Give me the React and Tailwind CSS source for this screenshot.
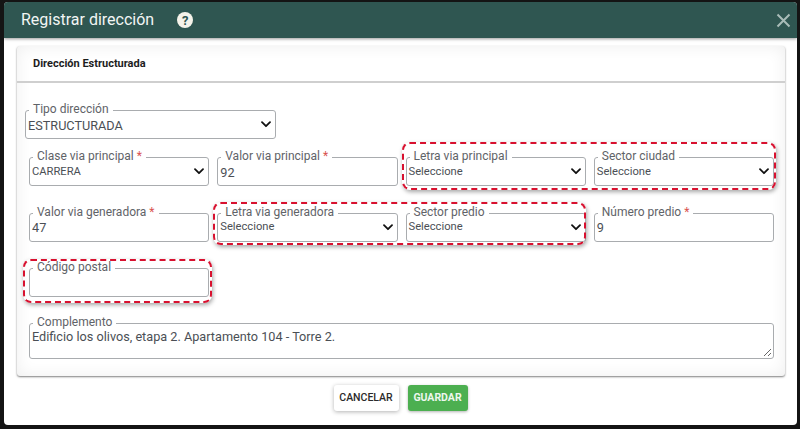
import React from "react";

const Chevron = () => (
  <svg width="10" height="7" viewBox="0 0 10 7" fill="none" className="shrink-0">
    <path d="M1 1.2 L5 5.2 L9 1.2" stroke="#111" strokeWidth="1.8" strokeLinecap="round" strokeLinejoin="round" />
  </svg>
);

const Field = ({ label, required, value, select, small, className = "" }) => (
  <div className={`relative h-[29px] rounded-[3px] border border-[#a9acaf] bg-white ${className}`}>
    <div className="absolute -top-[10px] left-[3px] flex items-center bg-white px-[4px] text-[12px] leading-[16px] text-[#5f6368] whitespace-nowrap">
      {label}
      {required && <span className="ml-[3px] text-[#d9534f]">*</span>}
    </div>
    <div className="flex h-full items-center justify-between pl-[2px] pr-[4px]">
      <span className={`${small ? "text-[11.2px]" : "text-[12.7px] pt-[2px]"} leading-[18px] text-[#4b4f55]`}>{value}</span>
      {select && <Chevron />}
    </div>
  </div>
);

const Marked = ({ className }) => (
  <div
    className={`pointer-events-none absolute rounded-[8px] border-2 border-dashed border-[#d8112f] shadow-[1px_2px_4px_rgba(0,0,0,0.35)] ${className}`}
  />
);

export default function App() {
  return (
    <div className="h-[429px] w-[800px] overflow-hidden bg-[#141414] pl-[4px] pr-[3px] pt-[2px] pb-[4px] font-['Roboto',sans-serif]">
      <div className="flex h-full flex-col overflow-hidden rounded-[4px] bg-white">
        {/* header */}
        <div className="flex h-[36px] shrink-0 items-center justify-between bg-[#2f5651] pl-[17px] pr-[6px] shadow-[0_1px_3px_rgba(0,0,0,0.4)]">
          <div className="flex items-center">
            <h1 className="text-[16px] font-normal leading-[22px] text-[#f2f5f4]">Registrar dirección</h1>
            <div className="ml-[23px] flex h-[16px] w-[16px] items-center justify-center rounded-full bg-[#f5f3ea] text-[13px] font-bold leading-none text-[#2f5651]">
              ?
            </div>
          </div>
          <svg width="15" height="15" viewBox="0 0 15 15" fill="none">
            <path d="M1.5 1.5 L13.5 13.5 M13.5 1.5 L1.5 13.5" stroke="#a9bcb8" strokeWidth="2" />
          </svg>
        </div>

        {/* panel */}
        <div className="ml-[13px] mr-[12px] mt-[8px] flex h-[330px] flex-col rounded-[3px] bg-white shadow-[0_1px_2px_rgba(0,0,0,0.5),inset_0_0_16px_rgba(0,0,0,0.07)]">
          <div className="flex h-[37px] shrink-0 items-center border-b-2 border-[#cfcfcf] pl-[16px] pt-[1px] text-[11px] font-bold text-[#1d1d1d]">
            Dirección Estructurada
          </div>
          <div className="relative flex-1 pl-[12px] pr-[11px] pt-[27px]">
            <Field label="Tipo dirección" value="ESTRUCTURADA" select className="-ml-[4px] w-[251px]" />

            <div className="mt-[18px] grid grid-cols-4 gap-x-[8px] gap-y-[26.5px]">
              <Field label="Clase via principal" required value="CARRERA" select small />
              <Field label="Valor via principal" required value="92" />
              <Field label="Letra via principal" value="Seleccione" select small />
              <Field label="Sector ciudad" value="Seleccione" select small />
              <Field label="Valor via generadora" required value="47" />
              <Field label="Letra via generadora" value="Seleccione" select small />
              <Field label="Sector predio" value="Seleccione" select small />
              <Field label="Número predio" required value="9" />
              <Field label="Código postal" value="" />
            </div>

            <div className="relative mt-[26px] h-[36px] rounded-[3px] border border-[#a9acaf] bg-white">
              <div className="absolute -top-[10px] left-[3px] bg-white px-[4px] text-[12px] leading-[16px] text-[#5f6368]">
                Complemento
              </div>
              <div className="pl-[2px] pt-[4px] text-[12.7px] leading-[18px] text-[#4b4f55]">
                Edificio los olivos, etapa 2. Apartamento 104 - Torre 2.
              </div>
              <svg width="9" height="9" viewBox="0 0 9 9" fill="none" className="absolute bottom-[1px] right-[1px]">
                <path d="M1 8 L8 1 M5 8 L8 5" stroke="#666" strokeWidth="1" />
              </svg>
            </div>

            <Marked className="left-[385px] top-[59px] h-[48px] w-[374px]" />
            <Marked className="left-[196px] top-[119px] h-[43px] w-[373px]" />
            <Marked className="left-[6px] top-[176px] h-[44px] w-[189px]" />
          </div>
        </div>

        {/* footer */}
        <div className="flex flex-1 items-center justify-center gap-[9px] pb-[6px]">
          <button className="h-[26px] w-[65px] rounded-[3px] bg-white text-[10.5px] font-medium text-[#2b2b2b] shadow-[0_1px_4px_rgba(0,0,0,0.3)]">
            CANCELAR
          </button>
          <button className="h-[26px] w-[60px] rounded-[3px] bg-[#4caf50] text-[10.5px] font-bold text-[#eef7ee] shadow-[0_1px_3px_rgba(0,0,0,0.3)]">
            GUARDAR
          </button>
        </div>
      </div>
    </div>
  );
}
